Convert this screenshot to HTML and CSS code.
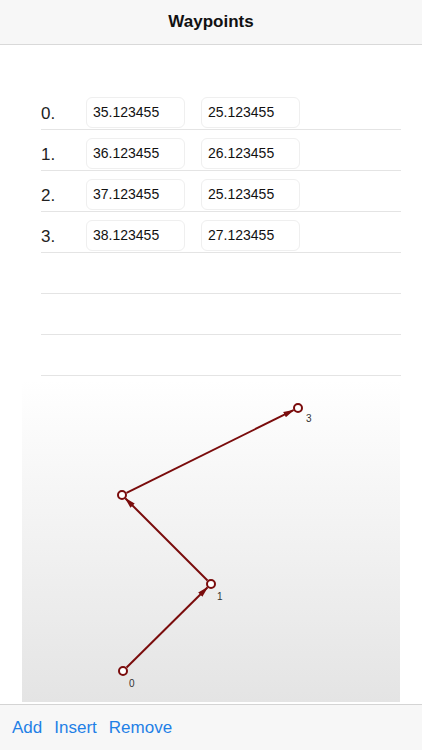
FILE: index.html
```html
<!DOCTYPE html>
<html>
<head>
<meta charset="utf-8">
<link rel="stylesheet" href="styles.css">
</head>
<body>
<div class="header">Waypoints</div>
<div class="main">
  <div class="table">
    <div class="row"><span class="idx">0.</span><div class="field">35.123455</div><div class="field">25.123455</div></div>
    <div class="row"><span class="idx">1.</span><div class="field">36.123455</div><div class="field">26.123455</div></div>
    <div class="row"><span class="idx">2.</span><div class="field">37.123455</div><div class="field">25.123455</div></div>
    <div class="row"><span class="idx">3.</span><div class="field">38.123455</div><div class="field">27.123455</div></div>
    <div class="row"></div>
    <div class="row"></div>
    <div class="row"></div>
  </div>
  <div class="chart">
    <svg width="378" height="322" viewBox="0 0 378 322">
      <defs>
        <marker id="arr" markerUnits="userSpaceOnUse" markerWidth="11" markerHeight="7" refX="10" refY="3.5" orient="auto">
          <path d="M0,0.5 L11,3.5 L0,6.5 z" fill="#7a0c0c"/>
        </marker>
      </defs>
      <g stroke="#7a0c0c" stroke-width="2" fill="none">
        <line x1="104.6" y1="287.5" x2="185.4" y2="207.5" marker-end="url(#arr)"/>
        <line x1="185.5" y1="200.5" x2="103.5" y2="118.5" marker-end="url(#arr)"/>
        <line x1="104.5" y1="112.8" x2="271.5" y2="30.2" marker-end="url(#arr)"/>
      </g>
      <g stroke="#7a0c0c" stroke-width="2" fill="#ffffff">
        <circle cx="101" cy="291" r="4"/>
        <circle cx="189" cy="204" r="4"/>
        <circle cx="100" cy="115" r="4"/>
        <circle cx="276" cy="28" r="4"/>
      </g>
      <g class="lbl">
        <text x="107" y="307">0</text>
        <text x="195" y="220">1</text>
        <text x="284" y="42">3</text>
      </g>
    </svg>
  </div>
</div>
<div class="toolbar">
  <span class="btn">Add</span>
  <span class="btn">Insert</span>
  <span class="btn">Remove</span>
</div>
</body>
</html>
```
FILE: styles.css
```css
html, body {
  margin: 0;
  padding: 0;
  background: #ffffff;
  font-family: "Liberation Sans", Arial, sans-serif;
  width: 422px;
  height: 750px;
  overflow: hidden;
}
.header {
  height: 44px;
  border-bottom: 1px solid #d9d9d9;
  background: #f7f7f7;
  display: flex;
  align-items: center;
  justify-content: center;
  font-weight: bold;
  font-size: 17px;
  color: #111;
}
.main {
  padding-top: 44px;
}
.table {
  margin-left: 41px;
  width: 360px;
}
.row {
  height: 40px;
  border-bottom: 1px solid #e4e4e4;
  display: flex;
  align-items: flex-start;
}
.idx {
  width: 45px;
  font-size: 17px;
  color: #222;
  line-height: 17px;
  margin-top: 16px;
}
.field {
  width: 91px;
  height: 29px;
  margin-top: 8px;
  margin-right: 16px;
  border: 1px solid #efefef;
  border-radius: 6px;
  font-size: 14px;
  color: #111;
  line-height: 29px;
  padding-left: 6px;
}
.chart {
  margin-top: 4px;
  margin-left: 22px;
  width: 378px;
  height: 322px;
  background: linear-gradient(#ffffff, #e4e4e4);
}
.chart svg {
  display: block;
}
.lbl text {
  font-family: "Liberation Sans", Arial, sans-serif;
  font-size: 10px;
  fill: #333;
}
.toolbar {
  margin-top: 2px;
  height: 45px;
  border-top: 1px solid #d4d4d4;
  background: #f7f7f7;
  display: flex;
  align-items: center;
  padding-left: 12px;
  gap: 12px;
}
.btn {
  font-size: 17px;
  color: #1f80e6;
  margin-top: 1px;
}
```
